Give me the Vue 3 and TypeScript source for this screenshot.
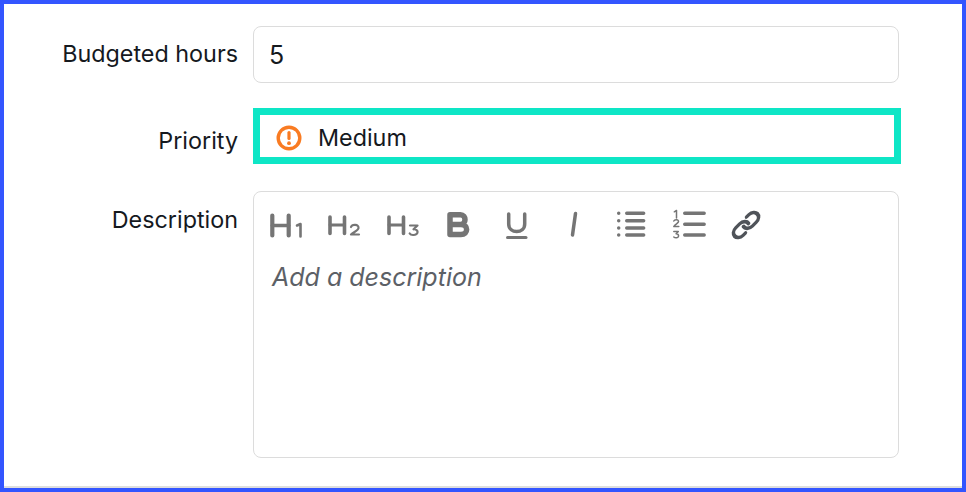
<template>
  <div class="frame">
    <form class="task-form">
      <label class="label label-hours">Budgeted hours</label>
      <div class="input-box">5</div>

      <label class="label label-priority">Priority</label>
      <div class="priority-box">
        <svg class="priority-icon" width="26" height="26" viewBox="0 0 26 26">
          <circle cx="13" cy="13" r="10.800" fill="none" stroke="#f97b22" stroke-width="3.400" />
          <path d="M13 7.500v6" stroke="#f97b22" stroke-width="3.200" stroke-linecap="round" />
          <circle cx="13" cy="18.200" r="1.900" fill="#f97b22" />
        </svg>
        <span>Medium</span>
      </div>

      <label class="label label-desc">Description</label>
      <div class="editor">
        <div class="toolbar">
          <svg v-for="tool in tools" :key="tool.name" class="tool" :style="{ marginRight: tool.gap + 'px' }" :width="tool.w" height="34" :viewBox="`0 0 ${tool.w} 34`" fill="none" :stroke="tool.color || '#757575'" stroke-linecap="round" stroke-linejoin="round">
            <path v-for="(p, i) in tool.paths" :key="i" :d="p.d" :stroke-width="p.sw" :transform="p.transform" />
          </svg>
        </div>
        <div class="placeholder">Add a description</div>
      </div>
    </form>
  </div>
</template>

<script setup lang="ts">
interface ToolPath {
  d: string;
  sw: number;
  transform?: string;
}

interface Tool {
  name: string;
  w: number;
  gap: number;
  color?: string;
  paths: ToolPath[];
}

const linkTransform = 'translate(16 17) rotate(-45) scale(1.32 1.05) rotate(45) translate(-12 -12)';

const tools: Tool[] = [
  {
    name: 'h1',
    w: 36,
    gap: 22,
    paths: [
      { d: 'M4.300 7.500v20M20.700 7.500v20', sw: 4.200 },
      { d: 'M4.300 17.500h16.400', sw: 3.400 },
      { d: 'M29 17.500l3.500-1.500v12.500', sw: 2.600 },
    ],
  },
  {
    name: 'h2',
    w: 36,
    gap: 23,
    paths: [
      { d: 'M4 9v16.500M18.500 9v16.500', sw: 3.600 },
      { d: 'M4 17h14.500', sw: 2.800 },
      { d: 'M25 19c1-3 8-3 7.500 1 0 2.500-5 4-7.500 6.500h8', sw: 2.200 },
    ],
  },
  {
    name: 'h3',
    w: 36,
    gap: 24,
    paths: [
      { d: 'M4 9v16.500M18.500 9v16.500', sw: 3.600 },
      { d: 'M4 17h14.500', sw: 2.800 },
      { d: 'M25 17.500h7.500l-4 3.800c5.500-.5 5.500 6-.5 5.700-1.500 0-2.700-.5-3.300-1.500', sw: 2.200 },
    ],
  },
  {
    name: 'bold',
    w: 27,
    gap: 32,
    paths: [
      { d: 'M5 6.800h10.500c6 0 6 9.700 0 9.700H5zM5 16.500h11c7.500 0 7.500 10 0 10H5z', sw: 5.500 },
    ],
  },
  {
    name: 'underline',
    w: 25,
    gap: 39,
    paths: [
      { d: 'M4.700 6v10c0 10 16 10 16 0V6', sw: 3.500 },
      { d: 'M3.500 29.500h18.500', sw: 3 },
    ],
  },
  {
    name: 'italic',
    w: 12,
    gap: 35,
    paths: [{ d: 'M7.500 5.500L4.500 27', sw: 3.500 }],
  },
  {
    name: 'bullets',
    w: 33,
    gap: 23,
    paths: [
      { d: 'M3.700 5.300h.01M3.700 12.700h.01M3.700 20h.01M3.700 27h.01', sw: 3.500 },
      { d: 'M11.700 5.300h17M11.700 12.700h17M11.700 20h17M11.700 27h17', sw: 3.400 },
    ],
  },
  {
    name: 'numbers',
    w: 37,
    gap: 22,
    paths: [
      { d: 'M3.300 3.800l2.200-1.300v7.500', sw: 1.500 },
      { d: 'M2.800 13c.8-1.800 5-1.800 4.700.7-.2 1.500-3.500 2.500-4.700 4.800h5', sw: 1.500 },
      { d: 'M2.800 23.500h4.500l-2.200 2.300c3.300-.2 3.300 4.200 0 4-.8 0-1.700-.2-2.300-.8', sw: 1.500 },
      { d: 'M13.700 5.300h19.500M13.700 16.300h19.500M13.700 27h19.500', sw: 3.400 },
    ],
  },
  {
    name: 'link',
    w: 32,
    gap: 0,
    color: '#4f5359',
    paths: [
      { d: 'M10 13a5 5 0 0 0 7.540.54l3-3a5 5 0 0 0-7.070-7.070l-1.720 1.710', sw: 3.100, transform: linkTransform },
      { d: 'M14 11a5 5 0 0 0-7.540-.54l-3 3a5 5 0 0 0 7.070 7.070l1.710-1.710', sw: 3.100, transform: linkTransform },
    ],
  },
];
</script>

<style scoped>
.frame {
  box-sizing: border-box;
  width: 966px;
  height: 492px;
  border: 4px solid #3355ff;
  background: #fff;
  font-family: Inter, sans-serif;
  color: #15191e;
}

.task-form {
  display: grid;
  grid-template-columns: 234px 646px;
  grid-template-rows: 57px 56px 269px;
  row-gap: 25px;
  column-gap: 15px;
  align-content: start;
  padding-top: 22px;
  height: 484px;
  box-sizing: border-box;
  border-bottom: 2px solid #dedede;
}

.label {
  font-size: 23.330px;
  line-height: 28px;
  text-align: right;
}

.label-hours {
  padding-top: 14px;
}

.label-priority {
  padding-top: 19px;
}

.label-desc {
  padding-top: 17px;
}

.input-box {
  box-sizing: border-box;
  border: 1px solid #dcdcdc;
  border-radius: 8px;
  padding-left: 15px;
  font-size: 25px;
  line-height: 56px;
}

.priority-box {
  box-sizing: border-box;
  border: 7px solid #0ee6c6;
  width: 648px;
  display: flex;
  align-items: center;
  padding-left: 16px;
  padding-top: 3px;
  font-size: 23.330px;
  gap: 16px;
}

.priority-icon {
  flex: none;
}

.editor {
  box-sizing: border-box;
  margin-top: 2px;
  border: 1px solid #dcdcdc;
  border-radius: 8px;
  padding: 16px 14px;
}

.toolbar {
  display: flex;
  align-items: flex-start;
}

.tool {
  flex: none;
}

.placeholder {
  margin-top: 21px;
  margin-left: 4px;
  font-size: 25px;
  line-height: 28px;
  font-style: italic;
  color: #5c6066;
}
</style>

<style>
html,
body {
  margin: 0;
  background: #fff;
}
</style>
